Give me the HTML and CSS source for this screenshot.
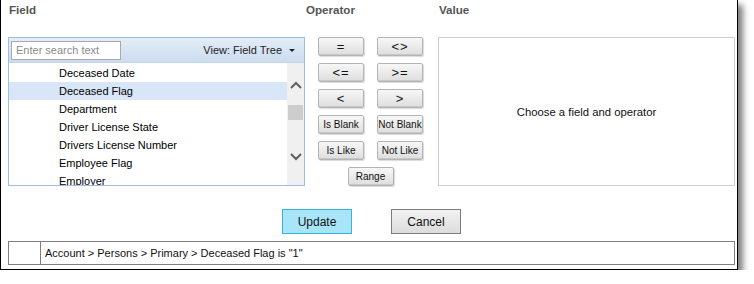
FILE: index.html
```html
<!DOCTYPE html>
<html lang="en">
<head>
    <meta charset="UTF-8">
    <title>Filter Condition</title>
    <link rel="stylesheet" href="styles.css">
</head>
<body>

<div class="dialog">
    <div class="editor">
        <div class="col-label">Field</div>
        <div class="col-label">Operator</div>
        <div class="col-label">Value</div>

        <!-- field picker -->
        <div class="field-panel">
            <div class="field-head">
                <input class="search" type="text" placeholder="Enter search text">
                <div class="view-pick">View: Field Tree <span class="caret"></span></div>
            </div>
            <div class="field-body">
                <ul class="field-list">
                    <li>Deceased Date</li>
                    <li class="selected">Deceased Flag</li>
                    <li>Department</li>
                    <li>Driver License State</li>
                    <li>Drivers License Number</li>
                    <li>Employee Flag</li>
                    <li>Employer</li>
                </ul>
                <div class="scrollbar">
                    <svg class="arrow" width="12" height="8" viewBox="0 0 12 8"><path d="M1 7 L6 2 L11 7" fill="none" stroke="#606060" stroke-width="2"/></svg>
                    <div class="thumb"></div>
                    <svg class="arrow arrow-down" width="12" height="8" viewBox="0 0 12 8"><path d="M1 1 L6 6 L11 1" fill="none" stroke="#606060" stroke-width="2"/></svg>
                </div>
            </div>
        </div>

        <!-- operators -->
        <div class="operators">
            <button class="op op-sym">=</button>
            <button class="op op-sym">&lt;&gt;</button>
            <button class="op op-sym">&lt;=</button>
            <button class="op op-sym">&gt;=</button>
            <button class="op op-sym">&lt;</button>
            <button class="op op-sym">&gt;</button>
            <button class="op">Is Blank</button>
            <button class="op">Not Blank</button>
            <button class="op">Is Like</button>
            <button class="op">Not Like</button>
            <button class="op op-range">Range</button>
        </div>

        <div class="value-panel">Choose a field and operator</div>
    </div>

    <div class="actions">
        <button class="btn btn-primary">Update</button>
        <button class="btn">Cancel</button>
    </div>

    <div class="status">
        <div class="status-icon"></div>
        <div class="status-text">Account &gt; Persons &gt; Primary &gt; Deceased Flag is "1"</div>
    </div>
</div>

</body>
</html>
```

FILE: styles.css
```css
body {
    margin: 0;
    background: #fff;
    font-family: 'Liberation Sans', Arial, sans-serif;
}

.dialog {
    width: 738px;
    height: 270px;
    box-sizing: border-box;
    border: 1px solid #000;
    border-top: none;
    background: #fff;
    box-shadow: 5px 5px 6px rgba(0,0,0,0.5);
    padding: 0 0 0 7px;
}

.editor {
    display: grid;
    grid-template-columns: 297px 133px 297px;
    grid-template-rows: 37px 149px;
}

.col-label {
    font-size: 11.6px;
    font-weight: bold;
    color: #555;
    padding-top: 3px;
    margin-left: 1px;
}

/* field picker */
.field-panel {
    border: 1px solid #9dbde3;
    display: flex;
    flex-direction: column;
    overflow: hidden;
}

.field-head {
    height: 25px;
    box-sizing: border-box;
    background: linear-gradient(#e4edf8, #ccdcef);
    border-bottom: 1px solid #c3d5ec;
    display: flex;
    align-items: center;
    justify-content: space-between;
    padding: 0 9px 0 2px;
}

.search {
    width: 110px;
    height: 19px;
    box-sizing: border-box;
    border: 1px solid #a9a9a9;
    padding: 0 4px;
    font-family: 'Liberation Sans', Arial, sans-serif;
    font-size: 11px;
    margin: 0;
}

.search::placeholder {
    color: #8a8a8a;
}

.view-pick {
    font-size: 11px;
    color: #222;
    display: flex;
    align-items: center;
}

.caret {
    width: 0;
    height: 0;
    border-left: 3px solid transparent;
    border-right: 3px solid transparent;
    border-top: 3px solid #222;
    margin-left: 7px;
}

.field-body {
    flex: 1;
    display: flex;
    min-height: 0;
}

.field-list {
    list-style: none;
    margin: 0;
    padding: 1px 0 0;
    flex: 1;
    overflow: hidden;
}

.field-list li {
    height: 18px;
    line-height: 18px;
    padding-left: 50px;
    font-size: 11px;
    color: #000;
}

.field-list li.selected {
    background: #d9e6f7;
}

.scrollbar {
    width: 17px;
    background: #f0f0f0;
    display: flex;
    flex-direction: column;
    align-items: center;
    padding-top: 18px;
}

.arrow {
    display: block;
}

.thumb {
    width: 15px;
    height: 15px;
    background: #cdcdcd;
    margin-top: 16px;
}

.arrow-down {
    margin-top: 33px;
}

/* operators */
.operators {
    display: grid;
    grid-template-columns: 46px 46px;
    grid-auto-rows: 19px;
    column-gap: 13px;
    row-gap: 7px;
    justify-content: center;
    align-content: start;
    padding-right: 2px;
}

.op {
    margin: 0;
    padding: 0;
    border: 1px solid #b4b4b4;
    border-radius: 2px;
    background: linear-gradient(#f7f7f7, #dedede);
    box-shadow: inset 0 -1px 0 #c8c8c8, 1px 1px 1px rgba(0,0,0,0.15);
    font-family: 'Liberation Sans', Arial, sans-serif;
    font-size: 10px;
    color: #111;
    white-space: nowrap;
}

.op-sym {
    font-size: 13px;
    letter-spacing: 1px;
}

.op-range {
    grid-column: 1 / 3;
    justify-self: center;
    width: 46px;
}

.value-panel {
    border: 1px solid #cfcfcf;
    display: flex;
    align-items: center;
    justify-content: center;
    font-size: 11.3px;
    color: #111;
}

/* bottom buttons */
.actions {
    display: flex;
    justify-content: center;
    gap: 39px;
    margin-top: 23px;
    padding-right: 2px;
}

.btn {
    width: 70px;
    height: 25px;
    margin: 0;
    border: 1px solid #7d7d7d;
    background: linear-gradient(#f2f2f2, #dcdcdc);
    font-family: 'Liberation Sans', Arial, sans-serif;
    font-size: 12px;
    color: #111;
}

.btn-primary {
    background: #a9e5f8;
    border-color: #35b3df;
}

/* status line */
.status {
    margin-top: 7px;
    width: 727px;
    height: 24px;
    box-sizing: border-box;
    border: 1px solid #7f7f7f;
    display: flex;
}

.status-icon {
    width: 31px;
    border-right: 1px solid #7f7f7f;
}

.status-text {
    font-size: 11px;
    line-height: 22px;
    padding-left: 4px;
    color: #111;
}
```
